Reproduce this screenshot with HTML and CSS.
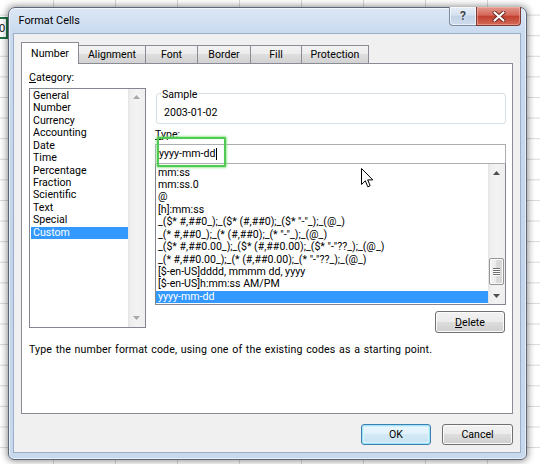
FILE: index.html
```html
<!DOCTYPE html>
<html>
<head>
<meta charset="utf-8">
<title>Format Cells</title>
<link rel="stylesheet" href="styles.css">
</head>
<body>
<div class="desktop">
  <div class="active-cell">0</div>
  <div class="dialog">
    <div class="titlebar">
      <span class="title">Format Cells</span>
      <div class="caption-buttons">
        <div class="cap-btn help">?</div>
        <div class="cap-btn close">
          <svg width="14" height="11" viewBox="0 0 14 11"><path d="M2.5 1.5 L11.5 9.5 M11.5 1.5 L2.5 9.5" stroke="#6b2620" stroke-width="4" stroke-linecap="round"/><path d="M2.5 1.5 L11.5 9.5 M11.5 1.5 L2.5 9.5" stroke="#ffffff" stroke-width="2.2" stroke-linecap="round"/></svg>
        </div>
      </div>
    </div>
    <div class="client">
      <div class="tabs">
        <div class="tab sel w-number">Number</div>
        <div class="tab w-align">Alignment</div>
        <div class="tab w-font">Font</div>
        <div class="tab w-border">Border</div>
        <div class="tab w-fill">Fill</div>
        <div class="tab w-prot">Protection</div>
      </div>
      <div class="panel">
        <div class="col-left">
          <div class="label"><u>C</u>ategory:</div>
          <div class="listbox cat">
            <ul class="items">
              <li>General</li>
              <li>Number</li>
              <li>Currency</li>
              <li>Accounting</li>
              <li>Date</li>
              <li>Time</li>
              <li>Percentage</li>
              <li>Fraction</li>
              <li>Scientific</li>
              <li>Text</li>
              <li>Special</li>
              <li class="selected">Custom</li>
            </ul>
            <div class="vscroll disabled">
              <div class="sb-btn"><svg width="7" height="4" viewBox="0 0 7 4"><path d="M0 4 L3.5 0 L7 4 Z"/></svg></div>
              <div class="sb-track"></div>
              <div class="sb-btn"><svg width="7" height="4" viewBox="0 0 7 4"><path d="M0 0 L3.5 4 L7 0 Z"/></svg></div>
            </div>
          </div>
        </div>
        <div class="col-right">
          <div class="sample">
            <span class="legend">Sample</span>
            <div class="sample-value">2003-01-02</div>
          </div>
          <div class="label type-label"><u>T</u>ype:</div>
          <div class="type-input">yyyy-mm-dd<span class="caret"></span></div>
          <div class="listbox fmt">
            <ul class="items">
              <li>mm:ss</li>
              <li>mm:ss.0</li>
              <li>@</li>
              <li>[h]:mm:ss</li>
              <li>_($* #,##0_);_($* (#,##0);_($* "-"_);_(@_)</li>
              <li>_(* #,##0_);_(* (#,##0);_(* "-"_);_(@_)</li>
              <li>_($* #,##0.00_);_($* (#,##0.00);_($* "-"??_);_(@_)</li>
              <li>_(* #,##0.00_);_(* (#,##0.00);_(* "-"??_);_(@_)</li>
              <li>[$-en-US]dddd, mmmm dd, yyyy</li>
              <li>[$-en-US]h:mm:ss AM/PM</li>
              <li class="selected">yyyy-mm-dd</li>
            </ul>
            <div class="vscroll">
              <div class="sb-btn"><svg width="7" height="4" viewBox="0 0 7 4"><path d="M0 4 L3.5 0 L7 4 Z"/></svg></div>
              <div class="sb-track">
                <div class="thumb"><i></i><i></i><i></i><i></i></div>
              </div>
              <div class="sb-btn"><svg width="7" height="4" viewBox="0 0 7 4"><path d="M0 0 L3.5 4 L7 0 Z"/></svg></div>
            </div>
          </div>
          <div class="delete-row"><button class="btn btn-delete"><u>D</u>elete</button></div>
        </div>
        <p class="desc">Type the number format code, using one of the existing codes as a starting point.</p>
      </div>
      <div class="footer">
        <button class="btn btn-ok">OK</button>
        <button class="btn btn-cancel">Cancel</button>
      </div>
    </div>
  </div>
  <div class="highlight-box"></div>
  <svg class="cursor" width="13" height="21" viewBox="0 0 13 21"><path d="M0.5 0.5 L0.5 16.5 L4.3 12.8 L6.8 18.8 L9.2 17.8 L6.7 11.9 L11.8 11.9 Z" fill="#ffffff" stroke="#000000" stroke-width="1" stroke-linejoin="round"/></svg>
</div>
</body>
</html>
```
FILE: styles.css
```css
* { box-sizing: border-box; }
html, body { margin: 0; padding: 0; }
body {
  width: 540px;
  height: 464px;
  overflow: hidden;
  font-family: Roboto, "Noto Sans", sans-serif;
  font-size: 10.6px;
  color: #000;
}
.desktop {
  position: relative;
  width: 540px;
  height: 464px;
  overflow: hidden;
  background-color: #ffffff;
  background-image:
    linear-gradient(to right, transparent 61px, #d8d8d8 61px),
    linear-gradient(to bottom, transparent 19.6px, #d8d8d8 19.6px);
  background-size: 62px 100%, 100% 20.6px;
  background-position: -8px 0, 0 -5px;
}
.active-cell {
  position: absolute;
  left: -40px;
  top: 17px;
  width: 48px;
  height: 22px;
  border: 2px solid #217346;
  font-family: "Liberation Sans", sans-serif;
  font-size: 11px;
  line-height: 18px;
  text-align: right;
  padding-right: 1px;
  background: #fff;
}
.dialog {
  position: absolute;
  left: 8px;
  top: 7px;
  width: 519px;
  height: 453px;
  border: 1px solid #5c6878;
  border-radius: 7px 7px 6px 6px;
  background: linear-gradient(to bottom, #dbe7f5 0, #c9daef 26px, #c2d4eb 60%, #c8d9ee 100%);
  box-shadow: 0 0 7px 1px rgba(0,0,0,0.45), inset 0 0 0 1px rgba(255,255,255,0.55);
  padding: 0 5px 6px 4px;
  display: flex;
  flex-direction: column;
}
.titlebar {
  height: 25px;
  display: flex;
  align-items: flex-start;
  flex: none;
}
.title {
  font-size: 10.9px;
  line-height: 14px;
  margin-top: 6px;
  padding-left: 5.5px;
  color: #000;
}
.caption-buttons {
  margin-left: auto;
  margin-top: -1px;
  display: flex;
}
.cap-btn {
  height: 19px;
  display: flex;
  align-items: center;
  justify-content: center;
}
.help {
  width: 27px;
  border: 1px solid #7d8ca0;
  border-top: none;
  border-right: none;
  border-radius: 0 0 0 4px;
  background: linear-gradient(to bottom, #e7eef7 0, #d6e2f0 45%, #c3d3e7 50%, #cfdcec 100%);
  box-shadow: inset 0 0 0 1px rgba(255,255,255,0.6);
  color: #3e4650;
  font-weight: bold;
  font-size: 12px;
  line-height: 14px;
  text-shadow: 0 0 2px #fff;
}
.close {
  width: 45px;
  border: 1px solid #7b3a34;
  border-top: none;
  border-radius: 0 0 4px 0;
  background: linear-gradient(to bottom, #e39a8e 0, #d4675a 45%, #c2402f 52%, #d46a55 100%);
  box-shadow: inset 0 0 0 1px rgba(255,200,190,0.45);
}
.client {
  height: 420px;
  background: #f0f0f0;
  border: 1px solid #9aaec8;
  padding: 8px 7px 0 7px;
  flex: none;
}
.tabs {
  display: flex;
  align-items: flex-end;
  height: 21px;
  position: relative;
  z-index: 2;
}
.tab {
  height: 18px;
  border: 1px solid #898c95;
  border-bottom: none;
  margin-left: -1px;
  background: linear-gradient(to bottom, #f3f3f3 0, #ebebeb 50%, #dedede 50%, #d2d2d2 100%);
  text-align: center;
  line-height: 17px;
  white-space: nowrap;
}
.tab.sel {
  height: 22px;
  margin-left: 0;
  margin-bottom: -1px;
  background: #ffffff;
  line-height: 21px;
  position: relative;
  z-index: 3;
}
.w-number { width: 58px; }
.w-align { width: 68px; }
.w-font { width: 53px; }
.w-border { width: 54px; }
.w-fill { width: 52px; }
.w-prot { width: 68px; }
.panel {
  height: 351px;
  background: #ffffff;
  border: 1px solid #898c95;
  display: grid;
  grid-template-columns: 117px 351px;
  column-gap: 9px;
  grid-template-rows: auto auto;
  align-content: start;
  padding: 8px 0 0 7px;
  position: relative;
  z-index: 1;
}
.label {
  line-height: 12.45px;
  white-space: nowrap;
}
.listbox {
  display: flex;
  border: 1px solid #828790;
  background: #fff;
}
.cat {
  margin-top: 3.5px;
  height: 240px;
}
.items {
  list-style: none;
  margin: 0;
  padding: 1px 0 0 0;
  flex: 1;
  min-width: 0;
  overflow: hidden;
}
.items li {
  line-height: 12.45px;
  height: 12.45px;
  padding-left: 2px;
  white-space: nowrap;
  overflow: hidden;
}
.cat .items li { margin-left: 1px; }
.items li.selected {
  background: #3399ff;
  color: #ffffff;
}
.vscroll {
  width: 17px;
  flex: none;
  display: flex;
  flex-direction: column;
  background: linear-gradient(to right, #e3e3e3 0, #eeeeee 2px, #f3f3f3 50%, #eeeeee 100%);
}
.sb-btn {
  height: 17px;
  flex: none;
  display: flex;
  align-items: center;
  justify-content: center;
}
.sb-btn svg { fill: #4f4f4f; }
.vscroll.disabled .sb-btn svg { fill: #a8a8a8; }
.sb-track {
  flex: 1;
  display: flex;
  flex-direction: column;
  justify-content: flex-end;
  padding: 0 1px 2px 1px;
}
.thumb {
  height: 27px;
  border: 1px solid #959595;
  border-radius: 2px;
  background: linear-gradient(to right, #f4f4f4 0, #eaeaea 50%, #dadada 50%, #d6d6d6 100%);
  box-shadow: inset 0 0 0 1px #fafafa;
  display: flex;
  flex-direction: column;
  align-items: center;
  justify-content: center;
  gap: 1px;
}
.thumb i {
  display: block;
  width: 7px;
  height: 1px;
  background: #6e6e6e;
  box-shadow: 0 1px 0 #ffffff;
}
.sample {
  margin: 21px 0 0 1px;
  height: 31px;
  border: 1px solid #d5dfe5;
  border-radius: 3px;
  position: relative;
  padding: 12.8px 0 0 7px;
}
.legend {
  position: absolute;
  top: -5.2px;
  left: 4px;
  padding: 0 1px;
  background: #ffffff;
  line-height: 12.45px;
}
.sample-value { line-height: 12.45px; }
.type-label { margin-top: 4.8px; }
.type-input {
  margin-top: 2.75px;
  height: 20px;
  border: 1px solid #abadb3;
  padding-left: 3px;
  line-height: 18px;
  display: flex;
  align-items: center;
}
.caret {
  display: inline-block;
  width: 1px;
  height: 12px;
  background: #000;
  margin-left: 1px;
}
.fmt {
  height: 141px;
  border-top: none;
}
.fmt .items { padding-top: 2.5px; }
.delete-row {
  display: flex;
  justify-content: flex-end;
  margin-top: 6px;
  padding-right: 1px;
}
.btn {
  font: inherit;
  color: #000;
  height: 21px;
  padding: 0;
  border: 1px solid #707070;
  border-radius: 3px;
  background: linear-gradient(to bottom, #f2f2f2 0, #ebebeb 50%, #dddddd 50%, #cfcfcf 100%);
  box-shadow: inset 0 0 0 1px #fbfbfb;
}
.btn-delete { width: 70px; height: 22px; }
.btn-ok {
  width: 70px;
  border-color: #3c7fb1;
  box-shadow: inset 0 0 0 1px #9fe3f7, inset 0 0 0 2px #d4f1fb;
  background: linear-gradient(to bottom, #eaf6fd 0, #e0f1fb 50%, #d3e9f6 50%, #c9e2f2 100%);
}
.btn-cancel { width: 71px; }
.desc {
  grid-column: 1 / -1;
  margin: 11px 0 0 0;
  line-height: 12.45px;
  white-space: nowrap;
  letter-spacing: 0.12px;
  word-spacing: 0.9px;
}
.footer {
  display: flex;
  justify-content: flex-end;
  gap: 11px;
  margin-top: 10px;
}
.highlight-box {
  position: absolute;
  left: 157px;
  top: 137px;
  width: 69px;
  height: 30px;
  border: 2px solid #52c952;
  border-radius: 1px;
  box-shadow: 0 0 2px 1px rgba(120, 230, 120, 0.7), inset 0 0 1px rgba(120, 230, 120, 0.7);
  pointer-events: none;
  z-index: 5;
}
.cursor {
  position: absolute;
  left: 361px;
  top: 168px;
  z-index: 6;
}
```
